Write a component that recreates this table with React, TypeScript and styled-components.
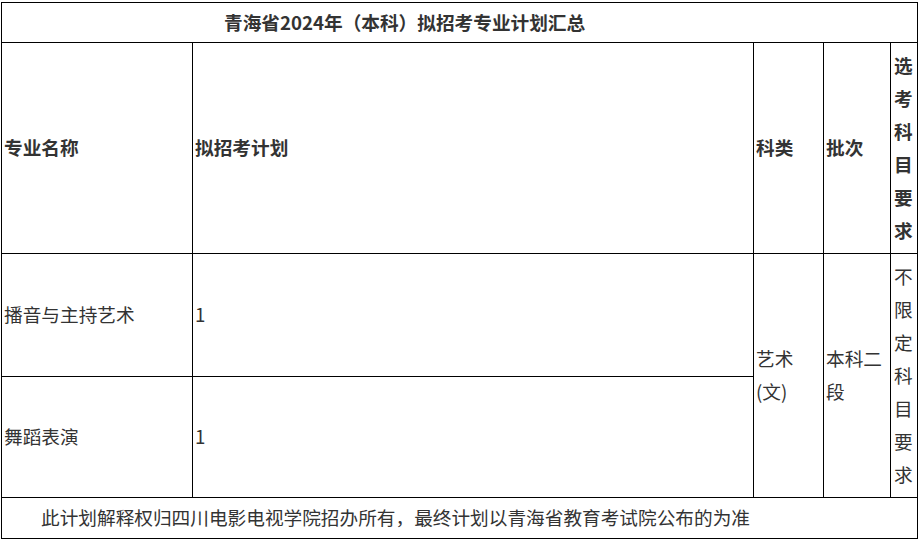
import React from "react";
import styled, { createGlobalStyle } from "styled-components";

const GlobalStyle = createGlobalStyle`
  html, body {
    margin: 0;
    padding: 0;
    background: #ffffff;
  }
  body {
    font-family: "Noto Sans CJK SC", "Noto Sans", sans-serif;
    color: #333333;
  }
`;

const Page = styled.div`
  padding: 2px 0 0 1px;
`;

const Table = styled.table`
  border-collapse: collapse;
  table-layout: fixed;
  width: 916px;
  font-size: 18.67px;
  line-height: 33px;
`;

const Cell = styled.td<{ $bold?: boolean; $h?: number }>`
  border: 1px solid #000000;
  padding: 0 3px 3px 2px;
  vertical-align: middle;
  font-weight: ${(p) => (p.$bold ? 700 : 400)};
  height: ${(p) => (p.$h ? `${p.$h}px` : "auto")};
  box-sizing: border-box;
  word-break: break-all;
`;

const NarrowCell = styled(Cell)`
  padding: 0 3px 3px 3px;
`;

const TitleCell = styled(Cell)`
  padding-left: 222px;
  font-weight: 700;
`;

const NoteCell = styled(Cell)`
  padding-left: 39px;
`;

const columns = [191, 561, 70, 67, 27];

const majors = [
  { name: "播音与主持艺术", plan: "1", h: 123 },
  { name: "舞蹈表演", plan: "1", h: 121 },
];

export default function App() {
  return (
    <Page>
      <GlobalStyle />
      <Table>
        <colgroup>
          {columns.map((w, i) => (
            <col key={i} style={{ width: w }} />
          ))}
        </colgroup>
        <tbody>
          <tr>
            <TitleCell colSpan={5} $h={40}>
              青海省2024年（本科）拟招考专业计划汇总
            </TitleCell>
          </tr>
          <tr>
            <Cell $bold $h={211}>专业名称</Cell>
            <Cell $bold>拟招考计划</Cell>
            <Cell $bold>科类</Cell>
            <Cell $bold>批次</Cell>
            <NarrowCell $bold>选考科目要求</NarrowCell>
          </tr>
          {majors.map((m, i) => (
            <tr key={m.name}>
              <Cell $h={m.h}>{m.name}</Cell>
              <Cell>{m.plan}</Cell>
              {i === 0 && (
                <>
                  <Cell rowSpan={2}>艺术(文)</Cell>
                  <Cell rowSpan={2}>本科二段</Cell>
                  <NarrowCell rowSpan={2}>不限定科目要求</NarrowCell>
                </>
              )}
            </tr>
          ))}
          <tr>
            <NoteCell colSpan={5} $h={41}>
              此计划解释权归四川电影电视学院招办所有，最终计划以青海省教育考试院公布的为准
            </NoteCell>
          </tr>
        </tbody>
      </Table>
    </Page>
  );
}
